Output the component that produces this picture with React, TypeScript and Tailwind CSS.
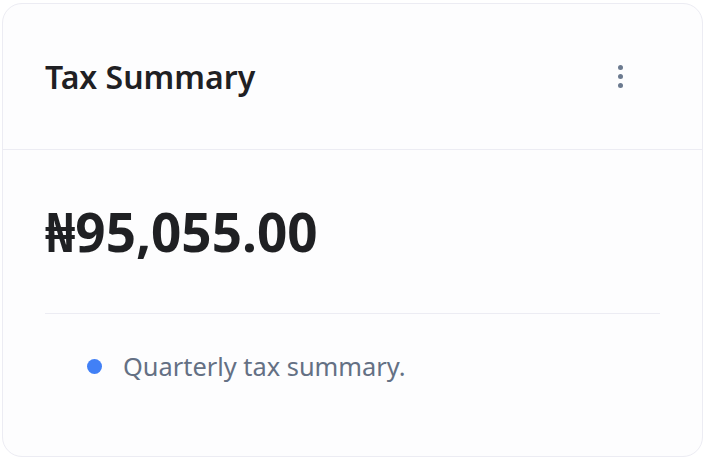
export default function App() {
  return (
    <div className="w-[708px] h-[458px] bg-white pt-[3px] pl-[2px]" style={{ fontFamily: '"Noto Sans", "Open Sans", sans-serif' }}>
      <div className="w-[701px] h-[454px] rounded-[20px] border border-[#ececf3] bg-[#fdfdfe] flex flex-col">
        {/* header */}
        <div className="h-[146px] flex items-center justify-between px-[42px] border-b border-[#ececf3]">
          <h2 className="text-[32px] font-semibold text-[#1f2023]">Tax Summary</h2>
          <button className="flex flex-col gap-[4px] items-center mr-[37px]">
            <span className="w-[5px] h-[5px] rounded-full bg-[#6b7a8f]" />
            <span className="w-[5px] h-[5px] rounded-full bg-[#6b7a8f]" />
            <span className="w-[5px] h-[5px] rounded-full bg-[#6b7a8f]" />
          </button>
        </div>

        {/* amount */}
        <div className="mx-[42px] h-[164px] flex items-center border-b border-[#ececf3]">
          <p className="text-[53px] font-bold text-[#1f2023] leading-none">₦95,055.00</p>
        </div>

        {/* footer */}
        <div className="flex items-center gap-[21px] pl-[84px] pt-[33px]">
          <span className="w-[15px] h-[15px] rounded-full bg-[#4180f6]" />
          <span className="text-[25.4px] text-[#647084]">Quarterly tax summary.</span>
        </div>
      </div>
    </div>
  );
}
